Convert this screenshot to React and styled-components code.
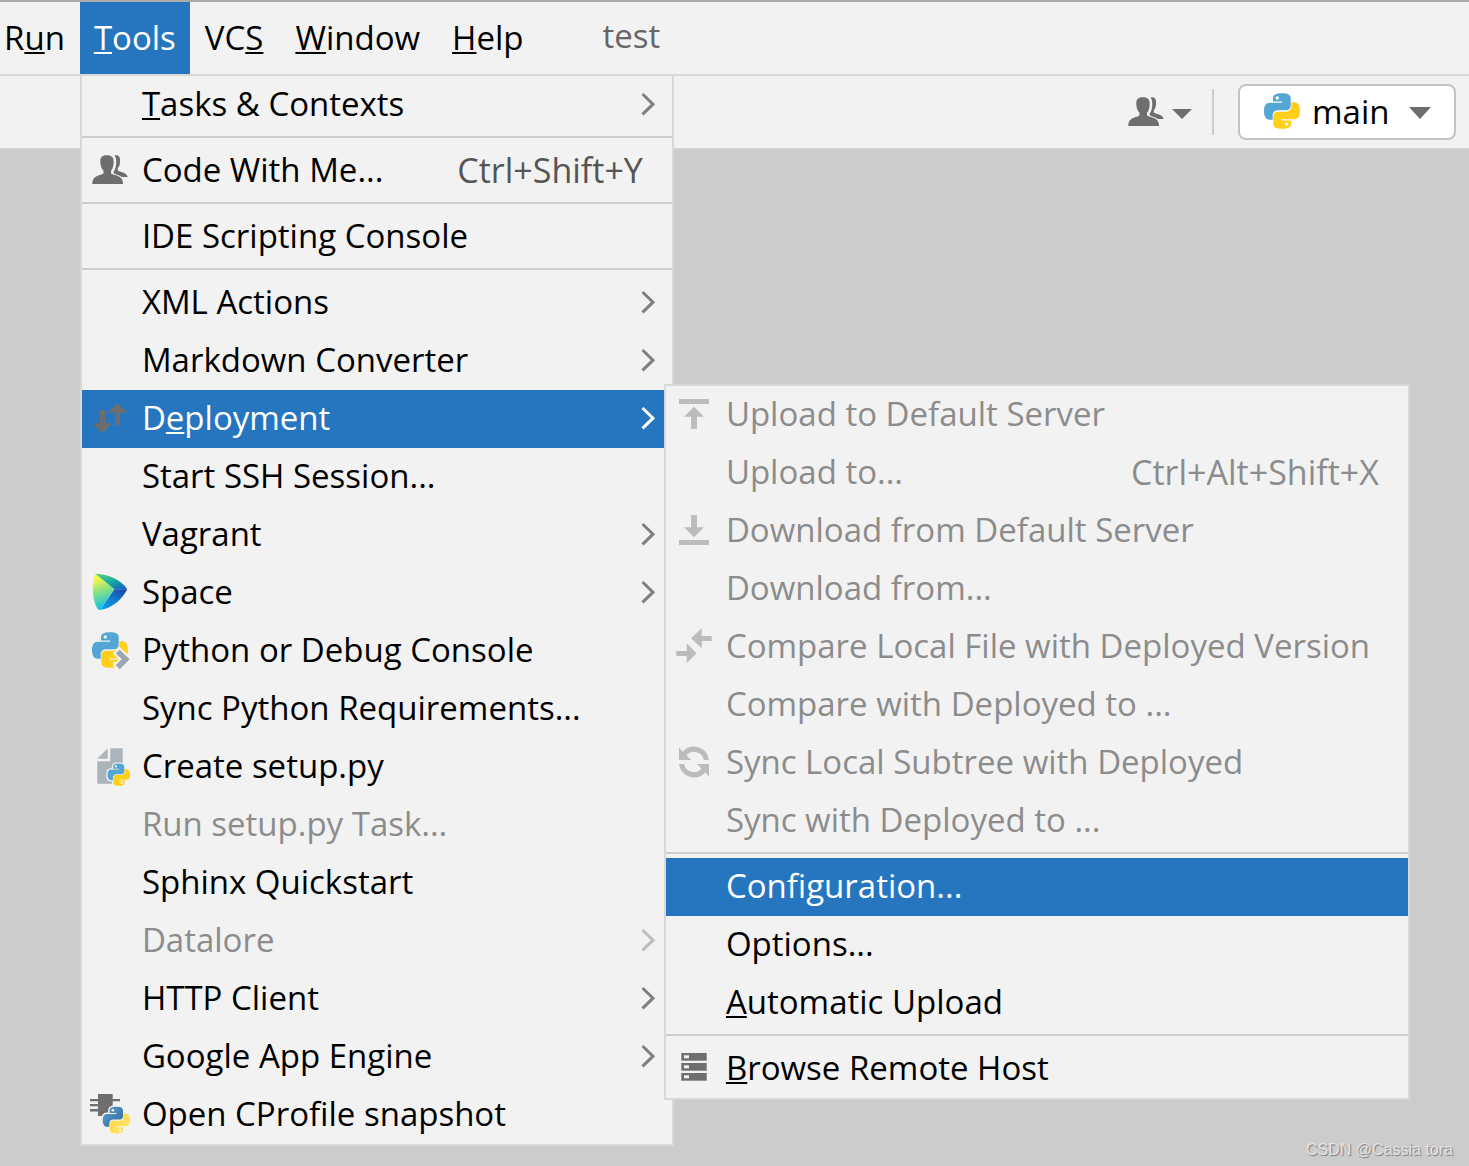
import React from "react";
import styled, { createGlobalStyle, css } from "styled-components";

const GlobalStyle = createGlobalStyle`
  * {
    box-sizing: border-box;
  }

  body {
    margin: 0;
    background: #cccccc;
    color: #000;
    font-family: "Open Sans", "Noto Sans", sans-serif;
    font-size: 33px;
    line-height: 40px;
  }

  button,
  select {
    font: inherit;
    color: inherit;
  }
`;

const Window = styled.div`
  min-height: 100vh;
  display: flex;
  flex-direction: column;
  border-top: 2px solid #ababab;
`;

const MenuBar = styled.nav`
  display: flex;
  height: 74px;
  background: #f2f2f2;
  border-bottom: 2px solid #d9d9d9;
`;

const MenuBarItem = styled.div`
  position: relative;
  display: flex;
`;

const MenuBarButton = styled.button`
  height: 72px;
  padding: 0 17px 0 15px;
  border: none;
  white-space: nowrap;
  background: transparent;

  ${p =>
    p.$open &&
    css`
      padding: 0 14px;
      background: #2675bf;
      color: #fff;
    `}

  ${p =>
    p.$edge &&
    css`
      padding: 0 15px 0 4px;
    `}
`;

const ProjectName = styled.span`
  margin-left: 62px;
  line-height: 68px;
  color: #666;
`;

const Toolbar = styled.div`
  display: flex;
  align-items: center;
  justify-content: flex-end;
  height: 74px;
  padding-right: 13px;
  background: #f2f2f2;
  border-bottom: 2px solid #d1d1d1;
`;

const UsersButton = styled.button`
  display: flex;
  align-items: center;
  gap: 6px;
  padding: 2px 0 0;
  border: none;
  background: none;
`;

const Divider = styled.div`
  width: 2px;
  height: 46px;
  margin: 0 24px 0 20px;
  background: #cdcdcd;
`;

const RunConfig = styled.label`
  display: flex;
  align-items: center;
  width: 218px;
  height: 56px;
  padding: 0 23px 0 22px;
  border: 2px solid #c4c4c4;
  border-radius: 8px;
  background: #fff;
`;

const RunSelect = styled.select`
  flex: 1;
  min-width: 0;
  padding: 0 0 0 10px;
  border: none;
  outline: none;
  appearance: none;
  background: none;
`;

const Editor = styled.main`
  flex: 1;
  display: flex;
  align-items: flex-end;
  justify-content: flex-end;
  padding: 0 16px 6px;
`;

const Watermark = styled.span`
  font-family: "Liberation Sans", sans-serif;
  font-size: 16px;
  line-height: 20px;
  color: #e4e4e4;
  text-shadow: 1px 1px 1px #777;
`;

const MenuList = styled.ul`
  position: absolute;
  z-index: 1;
  margin: 0;
  padding: 0;
  list-style: none;
  background: #f2f2f2;
  border: 2px solid #d9d9d9;
`;

const ToolsMenu = styled(MenuList)`
  top: 72px;
  left: 0;
  width: 594px;
`;

const SubMenu = styled(MenuList)`
  top: -6px;
  left: calc(100% - 8px);
  width: 746px;
`;

const Entry = styled.li`
  position: relative;
`;

const Separator = styled.li`
  height: 8px;
  padding: 2px 0 4px;
  background: #cdcdcd content-box;
`;

const EntryButton = styled.button`
  display: flex;
  align-items: center;
  gap: 12px;
  width: 100%;
  height: 58px;
  padding: 0 16px 0 8px;
  border: none;
  text-align: left;
  white-space: nowrap;
  background: ${p => (p.$selected ? "#2675bf" : "transparent")};
  color: ${p => (p.$selected ? "#fff" : "#000")};

  &:disabled {
    color: #8c8c8c;
  }
`;

const IconSlot = styled.span`
  display: flex;
  width: 40px;
  height: 40px;
`;

const Label = styled.span`
  flex: 1;
  padding-bottom: 2px;
`;

const Shortcut = styled.span`
  margin-right: 13px;
  padding-bottom: 2px;
  font-size: 34px;
  color: ${p => (p.$disabled ? "#8c8c8c" : "#555")};
`;

const Mnemonic = styled.span`
  text-decoration: underline;
  text-decoration-thickness: 2px;
  text-decoration-skip-ink: none;
  text-underline-offset: 2px;
`;

const IconSvg = styled.svg`
  flex: none;
  display: block;
  overflow: visible;
`;

const Icon = ({ children }) => (
  <IconSvg width="40" height="40" viewBox="0 0 40 40" aria-hidden="true">
    {children}
  </IconSvg>
);

const PY_TOP =
  "M20 1.300c-6.500 0-9 1.800-9 5v3.300h9.200v1.200H7.500C4 10.800 2 14 2 19s2 8.700 5.300 8.700h3.400v-4.200c0-3 2.300-5.200 5.200-5.200h8.400c2.400 0 4.400-2 4.400-4.600V6.300c0-3.200-2.700-5-8.700-5z";

const Python = ({ top = "#54a7d3", bottom = "#ffcf1a", eye = "#f2f2f2" }) => (
  <g>
    <path d={PY_TOP} fill={top} />
    <circle cx="15.300" cy="5.900" r="1.700" fill={eye} />
    <g transform="rotate(180 20 19)">
      <path d={PY_TOP} fill={bottom} />
      <circle cx="15.300" cy="5.900" r="1.700" fill={eye} />
    </g>
  </g>
);

const PythonOutline = () => (
  <g fill="#f2f2f2" stroke="#f2f2f2" strokeWidth="4">
    <path d={PY_TOP} />
    <path d={PY_TOP} transform="rotate(180 20 19)" />
  </g>
);

const UsersIcon = () => (
  <Icon>
    <g fill="#6e6e6e">
      <path d="M16.700 4.300c-5 0-6.600 2.600-6.400 7 .2 4 1.400 6.600 3.200 8.400v2.600c-1.200 1.400-6 2.200-8.400 4C3 27.900 2.300 30 2.300 33H33c0-3-.8-5.100-2.900-6.700-2.400-1.800-7.900-2.600-9.100-4v-2.600c1.800-1.800 2.500-4.400 2.700-8.400.2-4.400-1.800-7-7-7z" />
      <path d="M24.500 4.600c3.700-1 6 1 5.600 5.800-.2 3.400-1 5.400-2.300 6.800v2.300c1.600 1.700 9 1.700 9.900 6.500h-6c-2-1.700-6.800-2.500-8-3.900v-1.600c1.500-2 2.300-4.600 2.500-8.500.1-3-.2-5.500-1.700-7.400z" />
    </g>
  </Icon>
);

const DeploymentIcon = () => (
  <Icon>
    <g fill="#6e6e6e">
      <path d="M10 11.300h5v13h7.300l-9.900 10-9.800-10H10z" />
      <path d="M27.300 4.300l10 9.400H30v12.600h-5V13.700h-7.700z" />
    </g>
  </Icon>
);

const SpaceIcon = () => (
  <Icon>
    <defs>
      <linearGradient id="spaceLeft" x1="0.100" y1="0" x2="0.300" y2="1">
        <stop offset="0.150" stopColor="#f5f74a" />
        <stop offset="0.550" stopColor="#7be08a" />
        <stop offset="1" stopColor="#0fc0f0" />
      </linearGradient>
      <linearGradient id="spaceTop" x1="0" y1="0" x2="1" y2="1">
        <stop offset="0" stopColor="#57d977" />
        <stop offset="0.550" stopColor="#16a5a8" />
        <stop offset="1" stopColor="#1355c0" />
      </linearGradient>
      <linearGradient id="spaceBottom" x1="0" y1="1" x2="1" y2="0">
        <stop offset="0" stopColor="#0aa5f0" />
        <stop offset="0.500" stopColor="#137bd2" />
        <stop offset="1" stopColor="#1a3f9c" />
      </linearGradient>
    </defs>
    <path d="M5.300 1C16 .6 31.500 6.500 37.300 16.300H24.300z" fill="url(#spaceTop)" />
    <path d="M37.300 16.300C32.500 26 22 35.500 10 37l14.300-20.700z" fill="url(#spaceBottom)" />
    <path d="M5.300 1C2 8 1.500 26 7.500 35.500Q8.300 37 10 37l14.300-20.700z" fill="url(#spaceLeft)" />
  </Icon>
);

const PythonConsoleIcon = () => (
  <Icon>
    <Python />
    <path
      d="M29.700 18.700l10 9.600-10 10-4-4 6-6-6-6z"
      fill="#9aa7b0"
      stroke="#f2f2f2"
      strokeWidth="4"
      paintOrder="stroke"
    />
  </Icon>
);

const SetupFileIcon = () => (
  <Icon>
    <path d="M17.700 1.300v10.400H7.300z" fill="#aab5bb" />
    <path d="M20.300 1.300h12.400v35.400H7.300V14.300h13z" fill="#aab5bb" />
    <g transform="translate(16.200 15.700) scale(0.630)">
      <PythonOutline />
      <Python />
    </g>
  </Icon>
);

const ProfilerIcon = () => (
  <Icon>
    <defs>
      <linearGradient id="pyBlue" x1="0" y1="0" x2="1" y2="1">
        <stop offset="0" stopColor="#5a9fd4" />
        <stop offset="1" stopColor="#306998" />
      </linearGradient>
      <linearGradient id="pyYellow" x1="1" y1="1" x2="0" y2="0">
        <stop offset="0" stopColor="#ffd43b" />
        <stop offset="1" stopColor="#ffe873" />
      </linearGradient>
    </defs>
    <path
      d="M8-1h14.700v5H30v2.300h-7.300V21H8v-4.400H0V14h8v-2.700H0V9h8V6.300H0V4h8z"
      fill="#6e6e6e"
    />
    <g transform="translate(11.200 10.700) scale(0.760)">
      <PythonOutline />
      <Python top="url(#pyBlue)" bottom="url(#pyYellow)" />
    </g>
  </Icon>
);

const UploadIcon = () => (
  <Icon>
    <path d="M5 4h30v5H5zM20 11.700l10 10h-7V34h-6V21.700h-7z" fill="#bcbcbc" />
  </Icon>
);

const DownloadIcon = () => (
  <Icon>
    <path d="M5 29h30v5H5zM20 26.300l10-10h-7V4h-6v12.300h-7z" fill="#bcbcbc" />
  </Icon>
);

const CompareIcon = () => (
  <Icon>
    <path
      d="M17 11.300l10.700-10V9h10v5h-10v7.300zM22.700 26.300l-10 10V29H2.300v-5h10.400v-7.700z"
      fill="#bcbcbc"
    />
  </Icon>
);

const SyncIcon = () => {
  const half =
    "M5 4.300l3.700 4.500A15 15 0 0 1 34.900 17h-5A10 10 0 0 0 12.400 12.400L17.300 17H5z";
  return (
    <Icon>
      <g fill="#bcbcbc">
        <path d={half} />
        <path d={half} transform="rotate(180 20 19)" />
      </g>
    </Icon>
  );
};

const HostIcon = () => (
  <Icon>
    {[4, 14, 24].map(y => (
      <g key={y}>
        <rect x="7.300" y={y} width="25.400" height="7.700" fill="#6e6e6e" />
        <rect x="10" y={y + 2.3} width="5" height="3" fill="#f2f2f2" />
      </g>
    ))}
  </Icon>
);

const Chevron = ({ color }) => (
  <IconSvg width="16" height="24" viewBox="0 0 16 24" aria-hidden="true">
    <path d="M2.500 1L13 11.200 2.500 21.400" fill="none" stroke={color} strokeWidth="3" />
  </IconSvg>
);

const DropArrow = ({ width, height }) => (
  <IconSvg width={width} height={height} aria-hidden="true">
    <path d={`M0 1h${width}L${width / 2} ${height + 1}z`} fill="#6e6e6e" />
  </IconSvg>
);

// "&" marks the mnemonic letter, "&&" is a literal ampersand
const renderLabel = text => {
  const match = text.match(/^(.*?)&([A-Za-z])(.*)$/);
  if (!match) return text;
  return (
    <>
      {match[1]}
      <Mnemonic>{match[2]}</Mnemonic>
      {match[3].replace("&&", "&")}
    </>
  );
};

const deploymentItems = [
  { label: "Upload to Default Server", icon: UploadIcon, disabled: true },
  { label: "Upload to...", shortcut: "Ctrl+Alt+Shift+X", disabled: true },
  { label: "Download from Default Server", icon: DownloadIcon, disabled: true },
  { label: "Download from...", disabled: true },
  { label: "Compare Local File with Deployed Version", icon: CompareIcon, disabled: true },
  { label: "Compare with Deployed to ...", disabled: true },
  { label: "Sync Local Subtree with Deployed", icon: SyncIcon, disabled: true },
  { label: "Sync with Deployed to ...", disabled: true },
  null,
  { label: "Configuration...", selected: true },
  { label: "Options..." },
  { label: "&Automatic Upload" },
  null,
  { label: "&Browse Remote Host", icon: HostIcon }
];

const toolsItems = [
  { label: "&Tasks && Contexts", arrow: true },
  null,
  { label: "Code With Me...", icon: UsersIcon, shortcut: "Ctrl+Shift+Y" },
  null,
  { label: "IDE Scripting Console" },
  null,
  { label: "XML Actions", arrow: true },
  { label: "Markdown Converter", arrow: true },
  {
    label: "D&eployment",
    icon: DeploymentIcon,
    arrow: true,
    selected: true,
    items: deploymentItems
  },
  { label: "Start SSH Session..." },
  { label: "Vagrant", arrow: true },
  { label: "Space", icon: SpaceIcon, arrow: true },
  { label: "Python or Debug Console", icon: PythonConsoleIcon },
  { label: "Sync Python Requirements..." },
  { label: "Create setup.py", icon: SetupFileIcon },
  { label: "Run setup.py Task...", disabled: true },
  { label: "Sphinx Quickstart" },
  { label: "Datalore", arrow: true, disabled: true },
  { label: "HTTP Client", arrow: true },
  { label: "Google App Engine", arrow: true },
  { label: "Open CProfile snapshot", icon: ProfilerIcon }
];

const chevronColor = ({ selected, disabled }) => {
  if (selected) return "#fff";
  return disabled ? "#bcbcbc" : "#7f7f7f";
};

const MenuEntry = ({ item }) => {
  const ItemIcon = item.icon;
  return (
    <Entry>
      <EntryButton type="button" $selected={item.selected} disabled={item.disabled}>
        <IconSlot>{ItemIcon && <ItemIcon />}</IconSlot>
        <Label>{renderLabel(item.label)}</Label>
        {item.shortcut && (
          <Shortcut $disabled={item.disabled}>{item.shortcut}</Shortcut>
        )}
        {item.arrow && <Chevron color={chevronColor(item)} />}
      </EntryButton>
      {item.items && (
        <SubMenu>
          <MenuEntries items={item.items} />
        </SubMenu>
      )}
    </Entry>
  );
};

const MenuEntries = ({ items }) =>
  items.map((item, i) =>
    item ? <MenuEntry key={item.label} item={item} /> : <Separator key={i} role="separator" />
  );

const App = () => (
  <>
    <GlobalStyle />
    <Window>
      <MenuBar>
        <MenuBarItem>
          <MenuBarButton type="button" $edge>{renderLabel("R&un")}</MenuBarButton>
        </MenuBarItem>
        <MenuBarItem>
          <MenuBarButton type="button" $open>{renderLabel("&Tools")}</MenuBarButton>
          <ToolsMenu>
            <MenuEntries items={toolsItems} />
          </ToolsMenu>
        </MenuBarItem>
        {["VC&S", "&Window", "&Help"].map(label => (
          <MenuBarItem key={label}>
            <MenuBarButton type="button">{renderLabel(label)}</MenuBarButton>
          </MenuBarItem>
        ))}
        <ProjectName>test</ProjectName>
      </MenuBar>
      <Toolbar>
        <UsersButton type="button" aria-label="Code With Me">
          <UsersIcon />
          <DropArrow width={20} height={10} />
        </UsersButton>
        <Divider />
        <RunConfig>
          <Icon>
            <Python eye="#fff" />
          </Icon>
          <RunSelect aria-label="Run configuration" defaultValue="main">
            <option value="main">main</option>
          </RunSelect>
          <DropArrow width={22} height={12} />
        </RunConfig>
      </Toolbar>
      <Editor>
        <Watermark>CSDN @Cassia tora</Watermark>
      </Editor>
    </Window>
  </>
);

export default App;
